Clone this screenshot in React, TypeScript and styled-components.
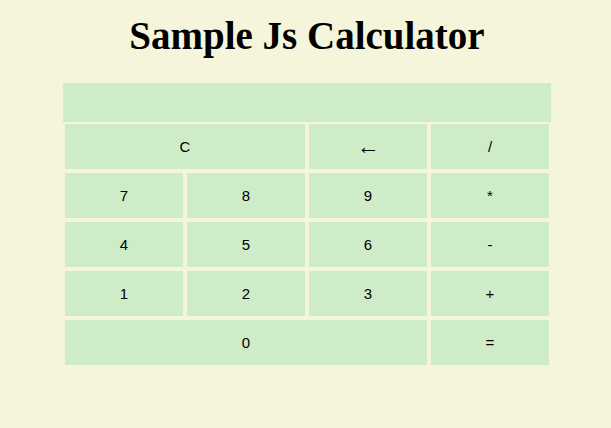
import React, { useState } from "react";
import styled, { createGlobalStyle } from "styled-components";

const GlobalStyle = createGlobalStyle`
  body {
    margin: 0;
    background-color: #f5f5dc;
    font-family: "Liberation Serif", "Times New Roman", serif;
  }
`;

const Page = styled.div`
  display: flex;
  flex-direction: column;
  align-items: center;
  padding-left: 3px;
`;

const Title = styled.h1`
  font-size: 39px;
  font-weight: bold;
  margin: 13px 0 25px;
  color: #000;
`;

const Calculator = styled.div`
  width: 488px;
  display: flex;
  flex-direction: column;
`;

const Display = styled.div`
  height: 39px;
  background-color: #cfecc9;
  font-family: "Liberation Sans", Arial, sans-serif;
  font-size: 22px;
  display: flex;
  align-items: center;
  justify-content: flex-end;
  padding: 0 10px;
  box-sizing: border-box;
`;

const Keypad = styled.div`
  display: grid;
  grid-template-columns: repeat(4, 118px);
  grid-auto-rows: 45px;
  gap: 4px;
  padding: 2px;
`;

const Key = styled.button<{ $span?: number }>`
  grid-column: span ${(p) => p.$span || 1};
  border: none;
  margin: 0;
  padding: 0;
  background-color: #cfecc9;
  color: #000;
  font-family: "Liberation Sans", Arial, sans-serif;
  font-size: 15px;
  cursor: pointer;
  &:hover {
    background-color: #c3e4bc;
  }
`;

const Arrow = styled.span`
  font-family: "Liberation Serif", serif;
  font-size: 23px;
  line-height: 1;
`;

const keys: { label: string; span?: number }[] = [
  { label: "C", span: 2 },
  { label: "←" },
  { label: "/" },
  { label: "7" },
  { label: "8" },
  { label: "9" },
  { label: "*" },
  { label: "4" },
  { label: "5" },
  { label: "6" },
  { label: "-" },
  { label: "1" },
  { label: "2" },
  { label: "3" },
  { label: "+" },
  { label: "0", span: 3 },
  { label: "=" },
];

export default function App() {
  const [value, setValue] = useState<string>("");

  const press = (label: string) => {
    if (label === "C") return setValue("");
    if (label === "←") return setValue((prev) => prev.slice(0, -1));
    if (label === "=") {
      try {
        // eslint-disable-next-line no-new-func
        const result = Function(`"use strict"; return (${value})`)();
        setValue(String(result));
      } catch {
        setValue("Error");
      }
      return;
    }
    setValue((prev) => prev + label);
  };

  return (
    <Page>
      <GlobalStyle />
      <Title>Sample Js Calculator</Title>
      <Calculator>
        <Display>{value}</Display>
        <Keypad>
          {keys.map((k) => (
            <Key key={k.label} $span={k.span} onClick={() => press(k.label)}>
              {k.label === "←" ? <Arrow>{k.label}</Arrow> : k.label}
            </Key>
          ))}
        </Keypad>
      </Calculator>
    </Page>
  );
}
